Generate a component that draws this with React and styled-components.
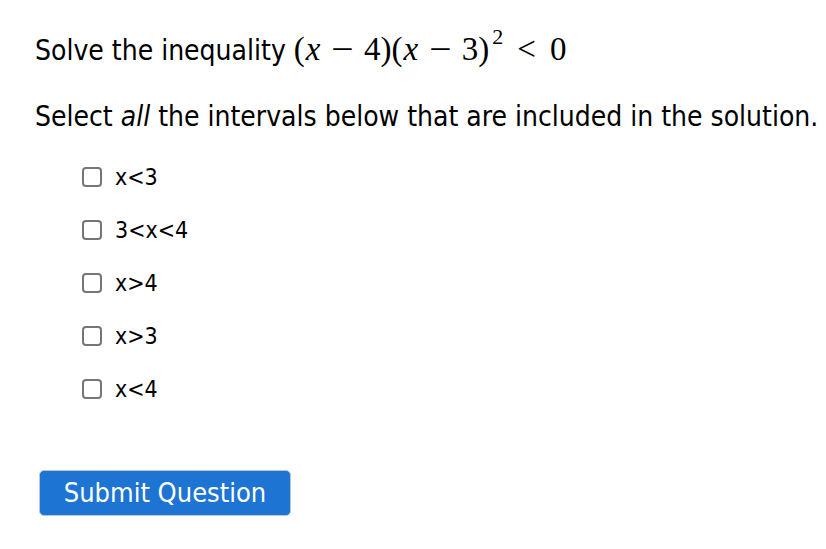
import React from 'react';
import styled, { createGlobalStyle } from 'styled-components';

const GlobalStyle = createGlobalStyle`
  body {
    margin: 0;
    background: #fff;
  }
`;

const Page = styled.div`
  padding: 29px 0 0 35px;
  font-family: "DejaVu Sans Condensed", "DejaVu Sans", sans-serif;
  font-size: 28px;
  color: #000;
`;

const Prompt = styled.div`
  line-height: 40px;
  height: 40px;
  white-space: nowrap;
`;

const MathExpr = styled.span`
  font-family: "Liberation Serif", "DejaVu Serif", serif;
  font-size: 33px;
  margin-left: 8px;
`;

const MathVar = styled.i`
  font-style: italic;
  margin: 0 1px;
`;

const Op = styled.span`
  display: inline-block;
  margin: 0 ${(p) => p.gap || 12}px;
  transform: scaleX(${(p) => p.stretch || 1});
`;

const Sup = styled.sup`
  font-size: 22px;
  vertical-align: 16px;
  line-height: 0;
  margin-left: 3px;
`;

const Instructions = styled.p`
  margin: 28px 0 24px;
  line-height: 40px;
  white-space: nowrap;
`;

const OptionList = styled.div`
  display: flex;
  flex-direction: column;
  gap: 20.5px;
  padding-left: 47px;
`;

const Option = styled.label`
  display: flex;
  align-items: center;
  gap: 13px;
  height: 32.5px;
  font-size: 23px;
`;

const Box = styled.span`
  width: 16px;
  height: 16px;
  border: 2px solid #767676;
  border-radius: 4px;
  background: #fff;
  flex-shrink: 0;
`;

const SubmitButton = styled.button`
  display: block;
  margin: 64px 0 0 4px;
  width: 252px;
  height: 46px;
  background: #1e74d2;
  color: #fff;
  border: 1px solid #b9c7d8;
  border-radius: 5px;
  font-family: "DejaVu Sans Condensed", "DejaVu Sans", sans-serif;
  font-size: 27px;
  padding: 0;
`;

const options = ['x<3', '3<x<4', 'x>4', 'x>3', 'x<4'];

export default function App() {
  return (
    <>
      <GlobalStyle />
      <Page>
        <Prompt>
          Solve the inequality
          <MathExpr>
            (<MathVar>x</MathVar>
            <Op stretch={1.2}>−</Op>4)(<MathVar>x</MathVar>
            <Op stretch={1.2}>−</Op>3)<Sup>2</Sup>
            <Op gap={14}>&lt;</Op>0
          </MathExpr>
        </Prompt>
        <Instructions>
          Select <i>all</i> the intervals below that are included in the solution.
        </Instructions>
        <OptionList>
          {options.map((o) => (
            <Option key={o}>
              <Box />
              {o}
            </Option>
          ))}
        </OptionList>
        <SubmitButton>Submit Question</SubmitButton>
      </Page>
    </>
  );
}
